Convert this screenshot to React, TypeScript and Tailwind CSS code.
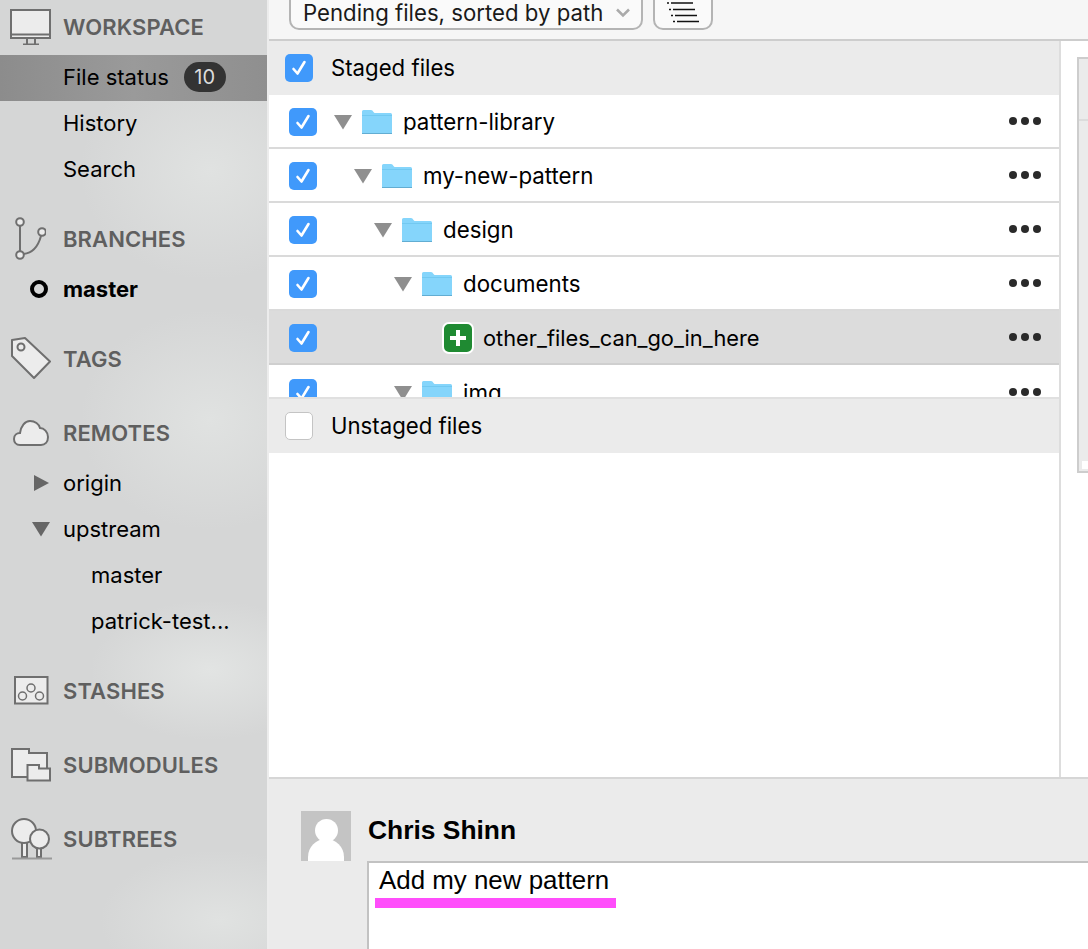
import React from "react";

const font = "font-['Inter','Noto_Sans',sans-serif]";
const G = "#6f6f6f";

function Monitor() {
  return (
    <svg width="42" height="36" viewBox="0 0 42 36">
      <rect x="1" y="1" width="39" height="28" fill="#ececec" stroke={G} strokeWidth="2" />
      <path d="M1 25.500H40" stroke={G} strokeWidth="2" />
      <path d="M13 35.500H29M17 30V35M25 30V35" stroke={G} strokeWidth="2" />
    </svg>
  );
}
function BranchIcon() {
  return (
    <svg width="36" height="44" viewBox="0 0 36 44" fill="none" stroke={G} strokeWidth="2">
      <circle cx="10" cy="5" r="3.800" fill="#ececec" />
      <circle cx="10" cy="38" r="3.800" fill="#ececec" />
      <circle cx="32" cy="15" r="3.800" fill="#ececec" />
      <path d="M10 9V34M13.500 37C23 36 28 30 31 19" />
    </svg>
  );
}
function TagIcon() {
  return (
    <svg width="44" height="44" viewBox="0 0 44 44" fill="#ececec" stroke={G} strokeWidth="2">
      <path d="M2 3L15 1L40 24.500L24 41L2 19Z" strokeLinejoin="round" />
      <circle cx="11" cy="10" r="3.500" fill="none" />
    </svg>
  );
}
function CloudIcon() {
  return (
    <svg width="38" height="28" viewBox="0 0 38 28" fill="#ececec" stroke={G} strokeWidth="2" className="ml-[3px]">
      <path d="M7 26C3 26 1 23 1 20C1 16 4 14 7 14C8 7 12 2 17 2C22 2 26 5 27 9C31 9 35 13 35 18C35 23 32 26 28 26Z" />
    </svg>
  );
}
function StashIcon() {
  return (
    <svg width="36" height="30" viewBox="0 0 36 30" fill="none" stroke={G}>
      <rect x="1" y="1" width="32.500" height="26.500" fill="#ececec" strokeWidth="2" />
      <circle cx="8.500" cy="20" r="4" strokeWidth="1.500" />
      <circle cx="17" cy="12" r="4" strokeWidth="1.500" />
      <circle cx="25.500" cy="20" r="4" strokeWidth="1.500" />
    </svg>
  );
}
function SubmoduleIcon() {
  return (
    <svg width="41" height="34" viewBox="0 0 41 34" fill="#ececec" stroke={G} strokeWidth="2" className="ml-px">
      <path d="M1 1H18V5H36V29H1Z" />
      <path d="M16.500 17H28V20.500H39V32.500H16.500Z" />
    </svg>
  );
}
function TreesIcon() {
  return (
    <svg width="42" height="42" viewBox="0 0 42 42" fill="#ececec" stroke={G} strokeWidth="2" className="ml-px">
      <path d="M11 22H16V39H11ZM26 28H30V39H26Z" />
      <circle cx="13" cy="13" r="12" />
      <circle cx="28.500" cy="21" r="9.500" />
      <path d="M1 40.500H41" stroke="#999" />
    </svg>
  );
}

function Check({ on = true }: { on?: boolean }) {
  return on ? (
    <span className="flex h-7 w-7 shrink-0 items-center justify-center rounded-[5px] bg-[#4099fb]">
      <svg width="18" height="18" viewBox="0 0 18 18" fill="none" stroke="#fff" strokeWidth="2.600" strokeLinecap="round" strokeLinejoin="round">
        <path d="M3.500 10L7.500 14.500L14.500 3" />
      </svg>
    </span>
  ) : (
    <span className="block h-7 w-7 shrink-0 rounded-[5px] border border-[#c4c4c4] bg-white" />
  );
}

function Triangle({ dir = "down", color = "#8f8f8f" }: { dir?: "down" | "right"; color?: string }) {
  return (
    <svg width="18" height="16" viewBox="0 0 18 16" className="shrink-0">
      {dir === "down" ? <path d="M0 1H18L9 15.500Z" fill={color} /> : <path d="M1 0L16 8L1 16Z" fill={color} />}
    </svg>
  );
}

function Folder() {
  return (
    <svg width="32" height="26" viewBox="0 0 32 26" className="shrink-0">
      <path d="M1 2.500Q1 1 2.500 1H10Q11.500 1 12.500 3L13.500 4H29.500Q31 4 31 5.500V24Q31 25 30 25H2Q1 25 1 24Z" fill="#85d5fb" />
      <path d="M1 6.500H31" stroke="#6dc5ef" strokeWidth="0.800" />
      <path d="M1 24.500H31" stroke="#62add2" strokeWidth="1" />
    </svg>
  );
}

function Dots() {
  return (
    <span className="mb-[2px] flex shrink-0 gap-1">
      <span className="h-2 w-2 rounded-full bg-[#2a2a2a]" />
      <span className="h-2 w-2 rounded-full bg-[#2a2a2a]" />
      <span className="h-2 w-2 rounded-full bg-[#2a2a2a]" />
    </span>
  );
}

function SectionHead({ icon, label, className = "" }: { icon: React.ReactNode; label: string; className?: string }) {
  return (
    <div className={`flex h-[46px] items-center ${className}`}>
      <span className="flex w-[63px] shrink-0 items-center justify-start pl-[10px]">{icon}</span>
      <span className="text-[22px] font-semibold tracking-[0.1px] text-[#5f5f5f]">{label}</span>
    </div>
  );
}

function NavRow({ children, className = "", indent = "pl-[63px]" }: { children: React.ReactNode; className?: string; indent?: string }) {
  return <div className={`relative flex h-[46px] items-center text-[22px] text-black ${indent} ${className}`}>{children}</div>;
}

function FileRow({ depth, name, last = false }: { depth: number; name: string; last?: boolean }) {
  return (
    <div className={`flex h-[54px] shrink-0 items-center bg-white pl-5 pr-[18px] pt-[2px] ${last ? "" : "border-b-2 border-[#dadada]"}`}>
      <Check />
      <div style={{ width: depth * 20 }} className="shrink-0" />
      <div className="ml-[17px] flex min-w-0 flex-1 items-center">
        <Triangle />
        <span className="ml-[9px]"><Folder /></span>
        <span className="ml-[10px] text-[22.300px] text-black">{name}</span>
      </div>
      <Dots />
    </div>
  );
}

export default function App() {
  return (
    <div className={`flex h-[949px] w-[1088px] overflow-hidden bg-white ${font}`}>
      <aside className="h-full w-[269px] shrink-0 border-r-2 border-[#ececec] bg-[#d5d6d6] bg-[radial-gradient(ellipse_130px_110px_at_210px_170px,#e0e2e1,transparent),radial-gradient(ellipse_130px_110px_at_210px_420px,#e0e2e1,transparent),radial-gradient(ellipse_120px_70px_at_210px_670px,#e2e4e3,transparent),radial-gradient(ellipse_120px_70px_at_220px_920px,#e0e2e1,transparent)] pt-1">
        <SectionHead icon={<Monitor />} label="WORKSPACE" />
        <NavRow className="mt-[5px] bg-[linear-gradient(90deg,#8c8c8c,#9a9a9a_50%,#8f8f8f)] pb-[2px]">
          File status
          <span className="ml-[15px] flex h-[30px] w-[42px] items-center justify-center rounded-full bg-[#333] text-[20px] text-[#dcdcdc]">10</span>
        </NavRow>
        <NavRow className="pb-[2px]">History</NavRow>
        <NavRow className="pb-[2px]">Search</NavRow>
        <SectionHead icon={<BranchIcon />} label="BRANCHES" className="mt-[23px]" />
        <NavRow className="mt-1 font-bold">
          <span className="absolute left-[30px] h-[18px] w-[18px] rounded-full border-[4px] border-black" />
          master
        </NavRow>
        <SectionHead icon={<TagIcon />} label="TAGS" className="mt-6" />
        <SectionHead icon={<CloudIcon />} label="REMOTES" className="mt-7" />
        <NavRow className="mt-1">
          <span className="absolute left-[33px]"><Triangle dir="right" color="#666" /></span>
          origin
        </NavRow>
        <NavRow>
          <span className="absolute left-[32px]"><Triangle color="#666" /></span>
          upstream
        </NavRow>
        <NavRow indent="pl-[91px]">master</NavRow>
        <NavRow indent="pl-[91px]">patrick-test...</NavRow>
        <SectionHead icon={<StashIcon />} label="STASHES" className="mt-6 [&>span:first-child]:pl-[14px]" />
        <SectionHead icon={<SubmoduleIcon />} label="SUBMODULES" className="mt-7" />
        <SectionHead icon={<TreesIcon />} label="SUBTREES" className="mt-7" />
      </aside>

      <main className="flex h-full min-w-0 flex-1 flex-col">
        <div className="flex h-[41px] shrink-0 items-end gap-[10px] border-b-2 border-[#cdcdcd] bg-[#f6f6f6] pb-[9px] pl-5">
          <div className="flex h-[34px] w-[354px] shrink-0 items-center rounded-b-[10px] border-2 border-[#b4b4b4] bg-[#fafafa] pl-[12px] pr-[10px] text-[22.200px] text-[#1a1a1a]">
            <span className="flex-1 whitespace-nowrap">Pending files, sorted by path</span>
            <svg width="16" height="10" viewBox="0 0 16 10" fill="none" stroke="#aaa" strokeWidth="2.500">
              <path d="M2 1.500L8 7.500L14 1.500" />
            </svg>
          </div>
          <div className="flex h-[34px] w-[60px] shrink-0 items-end justify-center rounded-b-[10px] border-2 border-[#b4b4b4] bg-[#fafafa] pb-[5px]">
            <svg width="32" height="21" viewBox="0 0 32 21" stroke="#111" strokeWidth="1.700">
              <path d="M0 1H2M4 1H26M2 7.500H4M6 7.500H28M4 13.500H6M8 13.500H30M6 19.500H8M10 19.500H32" />
            </svg>
          </div>
        </div>

        <div className="flex min-h-0 flex-1">
          <div className="flex w-[792px] shrink-0 flex-col border-r-2 border-[#dddddd]">
            <div className="flex h-[54px] shrink-0 items-center gap-[18px] bg-[#ebebeb] pl-4 text-[22.200px] text-black">
              <Check />
              Staged files
            </div>
            <div className="flex h-[302px] shrink-0 flex-col overflow-hidden">
              <FileRow depth={0} name="pattern-library" />
              <FileRow depth={1} name="my-new-pattern" />
              <FileRow depth={2} name="design" />
              <FileRow depth={3} name="documents" />
              <div className="flex h-[54px] shrink-0 items-center border-b-2 border-[#cfcfcf] bg-[#dcdcdc] pl-5 pr-[18px] pt-[2px]">
                <Check />
                <span className="ml-[125px] flex h-[32px] w-[32px] shrink-0 items-center justify-center rounded-[7px] border-2 border-white bg-[#1f8a32]">
                  <svg width="18" height="18" viewBox="0 0 18 18" stroke="#fff" strokeWidth="4">
                    <path d="M9 1V17M1 9H17" />
                  </svg>
                </span>
                <span className="ml-[9px] flex-1 text-[21.800px] text-black">other_files_can_go_in_here</span>
                <Dots />
              </div>
              <FileRow depth={3} name="img" last />
            </div>
            <div className="flex h-[56px] shrink-0 items-center gap-[18px] border-t-2 border-[#e0e0e0] bg-[#ebebeb] pl-4 text-[22.200px] text-black">
              <Check on={false} />
              Unstaged files
            </div>
            <div className="flex-1 bg-white" />
          </div>
          <div className="flex-1 bg-white pl-4 pt-4">
            <div className="flex h-[416px] w-[40px] flex-col border-2 border-r-0 border-[#cdcdcd] bg-[#ebebeb]">
              <div className="mt-[60px] h-[2px] bg-[#dcdcdc]" />
              <div className="flex-1" />
              <div className="mb-[2px] ml-[3px] h-[8px] bg-white" />
            </div>
          </div>
        </div>

        <div className="flex h-[172px] shrink-0 border-t-2 border-[#d6d6d6] bg-[#ebebeb] pl-8 pt-8">
          <div className="relative h-[50px] w-[50px] shrink-0 overflow-hidden bg-[#c4c4c4]">
            <span className="absolute left-[14px] top-[8px] h-[23px] w-[23px] rounded-full bg-white" />
            <span className="absolute left-[7px] top-[28px] h-[40px] w-[36px] rounded-t-[18px] bg-white" />
          </div>
          <div className="ml-[17px] flex min-w-0 flex-1 flex-col">
            <div className="flex h-[50px] shrink-0 items-center pb-[11px] font-['Liberation_Sans',sans-serif] text-[26.400px] font-bold text-black">
              Chris Shinn
            </div>
            <div className="relative -ml-px flex-1 border-l-2 border-t-2 border-[#c2c2c2] bg-white pl-[10px] font-['Liberation_Sans',sans-serif] text-[25.900px] leading-[35px] text-black">
              Add my new pattern
              <span className="absolute left-[6px] top-[35px] h-[10px] w-[241px] bg-[#ff4dfb]" />
            </div>
          </div>
        </div>
      </main>
    </div>
  );
}
